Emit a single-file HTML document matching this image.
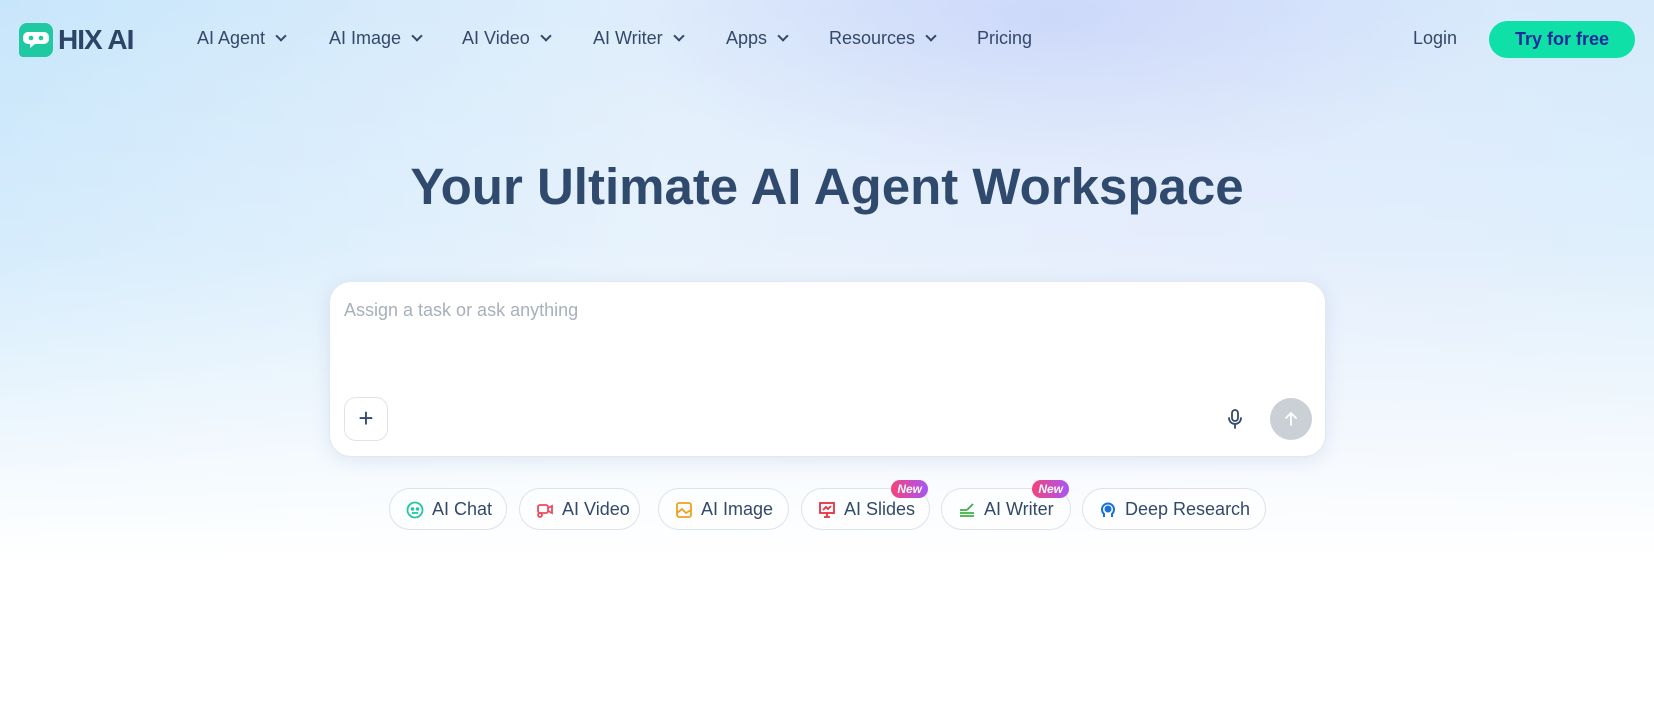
<!DOCTYPE html>
<html><head><meta charset="utf-8"><style>
*{margin:0;padding:0;box-sizing:border-box}
body{width:1654px;height:714px;overflow:hidden;font-family:"Liberation Sans",sans-serif;color:#2f4a6d;position:relative;
background:linear-gradient(180deg,rgba(255,255,255,0) 0px,rgba(255,255,255,.25) 250px,#fff 560px),
radial-gradient(ellipse 450px 160px at 1050px 20px,rgba(200,212,250,.8) 0%,rgba(200,212,250,0) 100%),
linear-gradient(90deg,#c8e6fb 0%,#e0eefb 40%,#dde8fb 70%,#d5eafb 100%);}
.a{position:absolute;white-space:nowrap}
.nav{font-size:18px;top:28px;color:#34496a}
.chev{display:inline-block;width:8px;height:8px;border-right:2px solid #34496a;border-bottom:2px solid #34496a;transform:rotate(45deg);margin-left:12px;position:relative;top:-4px}
.chip{position:absolute;top:488px;height:42px;border:1px solid #dde3ea;border-radius:21px;background:rgba(255,255,255,.6);font-size:18px;color:#34496a;display:flex;align-items:center;padding-left:42px}
.chip svg{position:absolute;left:16px;top:12px}
.new{position:absolute;top:-9px;right:1px;background:linear-gradient(90deg,#f5427a,#a855f7);color:#fff;font-size:12px;font-weight:bold;font-style:italic;border-radius:10px;padding:2px 6px;line-height:14px}
</style></head><body>
<svg class="a" style="left:19px;top:23px" width="34" height="34" viewBox="0 0 34 34"><path d="M8 0h18a8 8 0 0 1 8 8v18a8 8 0 0 1-8 8H4a4 4 0 0 1-4-4V8a8 8 0 0 1 8-8z" fill="#20c9a1"/><path d="M9 9h16a5 5 0 0 1 5 5v2a5 5 0 0 1-5 5H16l-5 4v-4h-2a5 5 0 0 1-5-5v-2a5 5 0 0 1 5-5z" fill="#fff"/><circle cx="12" cy="15" r="2.3" fill="#20c9a1"/><circle cx="22" cy="15" r="2.3" fill="#20c9a1"/></svg>
<div class="a" style="left:58px;top:24px;font-size:28px;font-weight:bold;color:#2c4466;letter-spacing:-1px">HIX AI</div>
<div class="a nav" style="left:197px">AI Agent<span class="chev"></span></div>
<div class="a nav" style="left:329px">AI Image<span class="chev"></span></div>
<div class="a nav" style="left:462px">AI Video<span class="chev"></span></div>
<div class="a nav" style="left:593px">AI Writer<span class="chev"></span></div>
<div class="a nav" style="left:726px">Apps<span class="chev"></span></div>
<div class="a nav" style="left:829px">Resources<span class="chev"></span></div>
<div class="a nav" style="left:977px">Pricing</div>
<div class="a nav" style="left:1413px">Login</div>
<div class="a" style="left:1489px;top:21px;width:146px;height:37px;border-radius:19px;background:#0fe0a8;color:#1d2a9a;font-weight:bold;font-size:18px;text-align:center;line-height:37px">Try for free</div>
<div class="a" style="left:0;width:1654px;top:157px;text-align:center;font-size:51px;font-weight:bold;color:#2f4a6d">Your Ultimate AI Agent Workspace</div>
<div class="a" style="left:329px;top:281px;width:997px;height:176px;background:#fff;border-radius:22px;border:1px solid #e3e8ee;box-shadow:0 4px 18px rgba(120,150,190,.18)"></div>
<div class="a" style="left:344px;top:300px;font-size:18px;color:#a7b0bb">Assign a task or ask anything</div>
<div class="a" style="left:344px;top:397px;width:44px;height:44px;border:1px solid #dfe3e8;border-radius:12px;text-align:center;line-height:40px;font-size:26px;color:#34496a">+</div>
<svg class="a" style="left:1225px;top:408px" width="20" height="22" viewBox="0 0 20 22" fill="none" stroke="#34496a" stroke-width="1.8" stroke-linecap="round"><rect x="7" y="2" width="6" height="11" rx="3"/><path d="M4 10a6 6 0 0 0 12 0M10 16v4"/></svg>
<div class="a" style="left:1270px;top:398px;width:42px;height:42px;border-radius:50%;background:#cbd0d6"></div>
<svg class="a" style="left:1282px;top:410px" width="18" height="18" viewBox="0 0 18 18" fill="none" stroke="#fff" stroke-width="1.8" stroke-linecap="round"><path d="M9 15V3M4 8l5-5 5 5"/></svg>
<div class="chip" style="left:389px;width:118px"><svg width="18" height="18" viewBox="0 0 18 18" fill="none" stroke="#20c9a1" stroke-width="1.8"><circle cx="9" cy="9" r="7.5"/><circle cx="6.5" cy="8" r=".8" fill="#20c9a1"/><circle cx="11.5" cy="8" r=".8" fill="#20c9a1"/><path d="M6 12h6"/></svg>AI Chat</div>
<div class="chip" style="left:519px;width:121px"><svg width="18" height="18" viewBox="0 0 18 18" fill="none" stroke="#f04a5a" stroke-width="1.8"><rect x="2" y="4" width="10" height="8" rx="2"/><path d="M12 7l4-2v7l-4-2"/><circle cx="4" cy="14" r="2"/></svg>AI Video</div>
<div class="chip" style="left:658px;width:131px"><svg width="18" height="18" viewBox="0 0 18 18" fill="none" stroke="#f0a020" stroke-width="1.8"><rect x="2" y="2" width="14" height="14" rx="2"/><path d="M2 12l5-4 4 4 5-3"/></svg>AI Image</div>
<div class="chip" style="left:801px;width:129px"><svg width="18" height="18" viewBox="0 0 18 18" fill="none" stroke="#e83040" stroke-width="1.8"><rect x="2" y="2" width="14" height="10"/><path d="M5 9l3-3 2 2 3-3M9 12v4M6 16h6"/></svg>AI Slides<span class="new">New</span></div>
<div class="chip" style="left:941px;width:130px"><svg width="18" height="18" viewBox="0 0 18 18" fill="none" stroke="#3cb043" stroke-width="1.8"><path d="M2 9h7M2 12h14M2 15h14M9 9l6-6"/></svg>AI Writer<span class="new">New</span></div>
<div class="chip" style="left:1082px;width:184px"><svg width="18" height="18" viewBox="0 0 18 18" fill="none" stroke="#1a6fe0" stroke-width="2"><path d="M5 16v-3a6 6 0 1 1 8 0v3"/><circle cx="9" cy="8" r="2.5" fill="#1a6fe0"/></svg>Deep Research</div>
</body></html>
